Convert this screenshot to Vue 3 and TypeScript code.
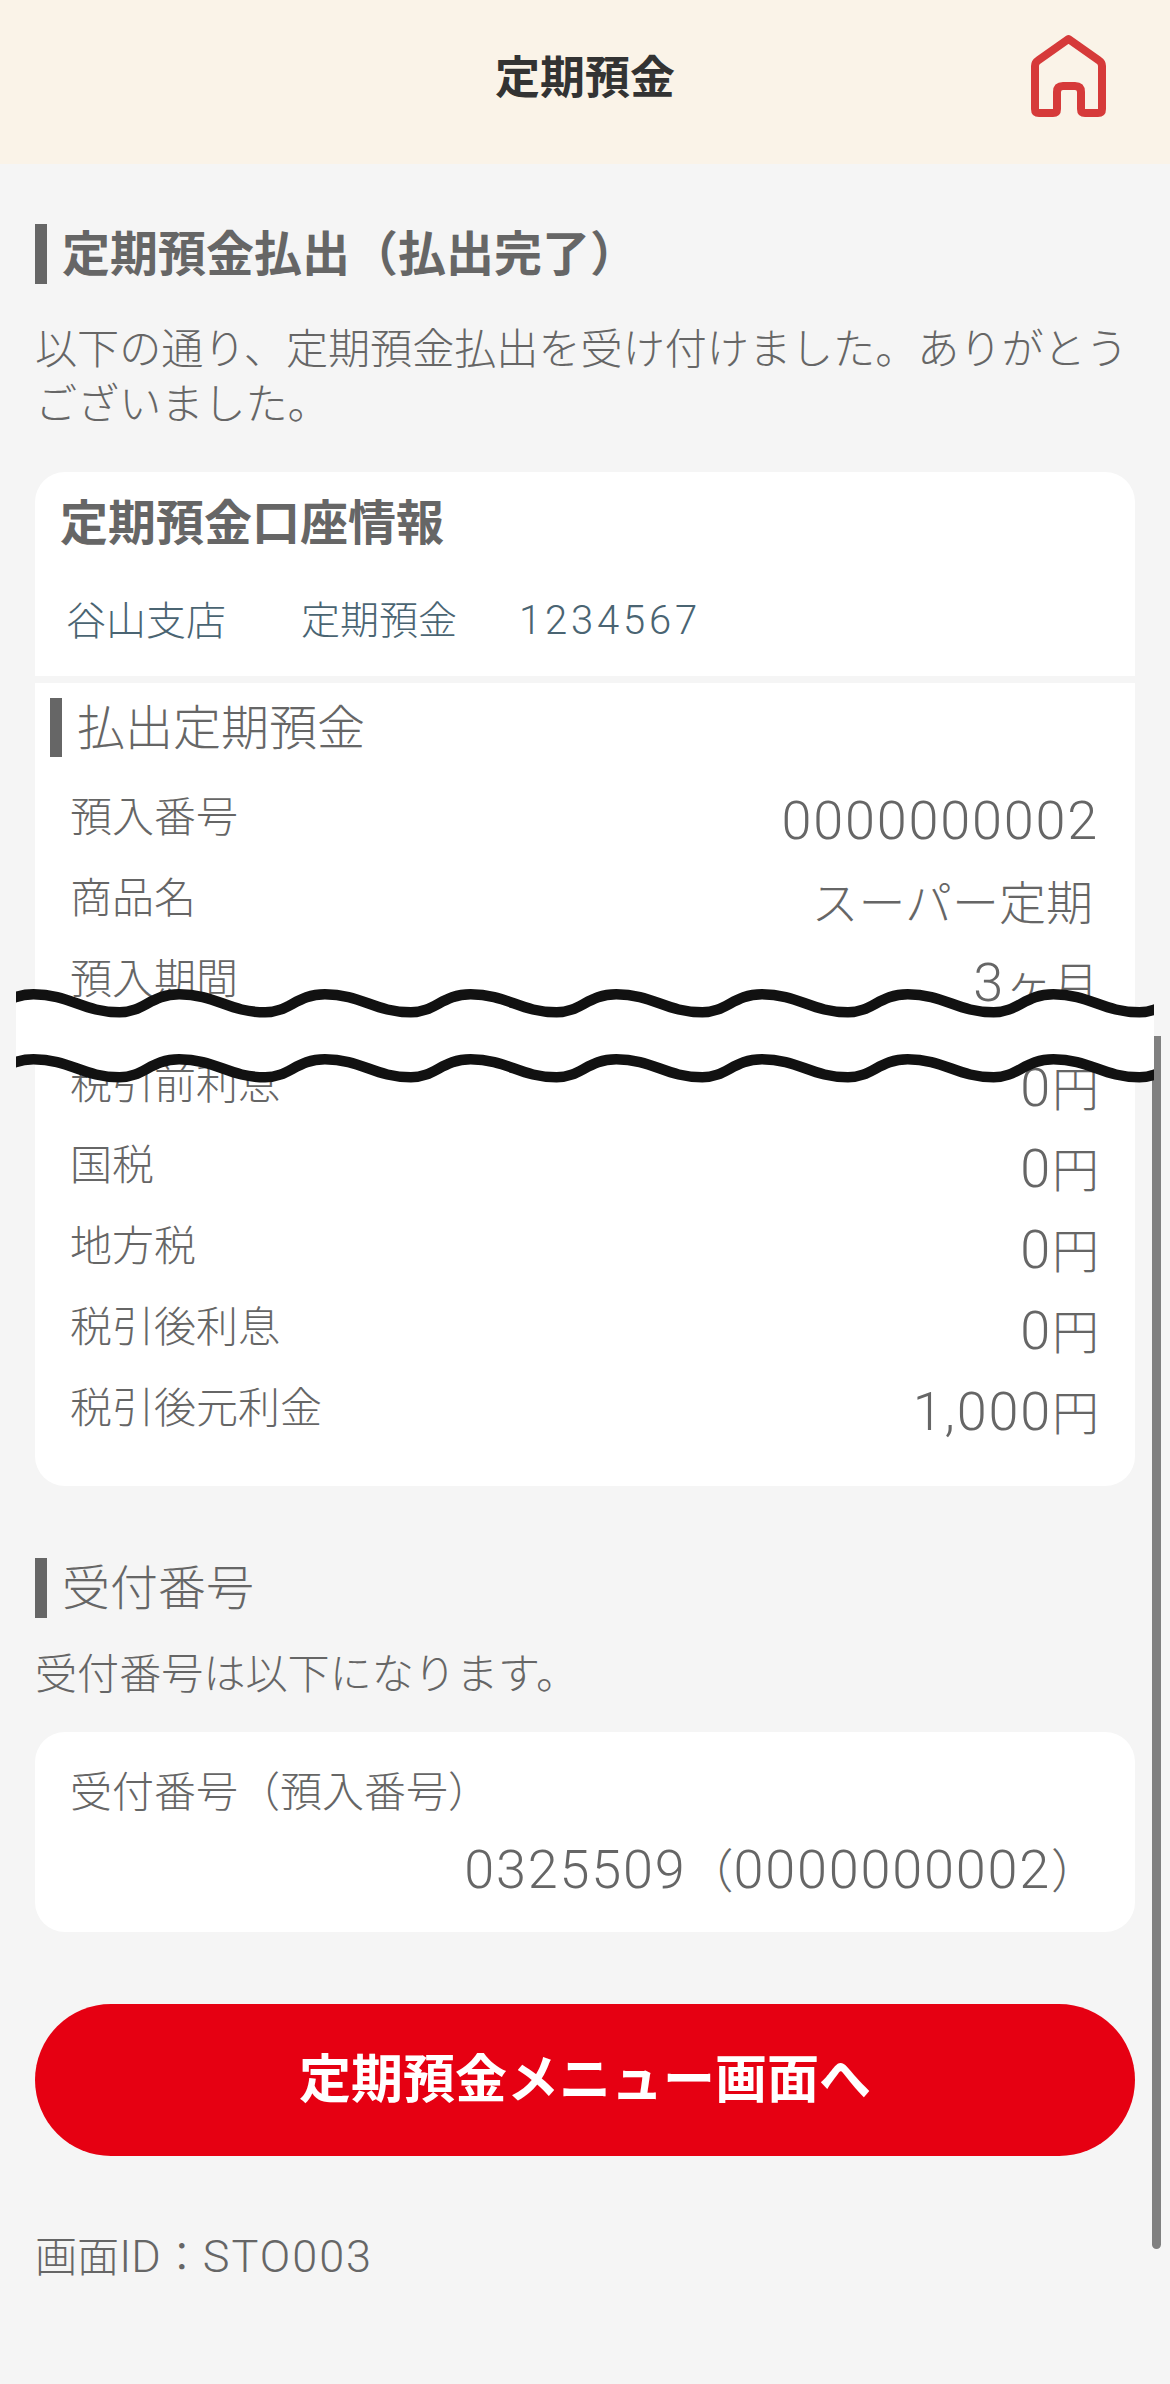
<template>
  <div class="page">
    <header class="top-bar">
      <span></span>
      <div class="top-title">定期預金</div>
      <svg class="home-icon" width="76" height="84" viewBox="0 0 76 84">
        <path
          d="M37.5 5 L68 26.5 Q71 28.5 71 32 V75 Q71 79 67 79 H54 Q50 79 50 75 V58 Q50 52 44 52 H32 Q26 52 26 58 V75 Q26 79 22 79 H8 Q4 79 4 75 V32 Q4 28.5 7 26.5 Z"
          fill="none"
          stroke="#d63a3a"
          stroke-width="8"
          stroke-linejoin="round"
        />
      </svg>
    </header>

    <main class="content">
      <h1 class="heading bold">定期預金払出（払出完了）</h1>
      <p class="intro">以下の通り、定期預金払出を受け付けました。ありがとうございました。</p>

      <section class="account-card">
        <h2 class="card-title">定期預金口座情報</h2>
        <div class="account-row">
          <span class="branch">谷山支店</span>
          <span class="kind">定期預金</span>
          <span class="number">1234567</span>
        </div>
      </section>

      <section class="detail-card">
        <h2 class="heading sub">払出定期預金</h2>
        <div
          v-for="row in rows"
          :key="row.label"
          class="row"
          :class="{ cut: row.cut }"
        >
          <span class="label">{{ row.label }}</span>
          <span class="value" :class="{ 'text-only': !row.num }"><span class="num">{{ row.num }}</span>{{ row.unit }}</span>
        </div>
      </section>

      <h2 class="heading receipt">受付番号</h2>
      <p class="note">受付番号は以下になります。</p>

      <section class="receipt-card">
        <div class="label">受付番号（預入番号）</div>
        <div class="value receipt-value">
          <span class="num">0325509</span>（<span class="num">0000000002</span>）
        </div>
      </section>

      <button class="menu-button">定期預金メニュー画面へ</button>
      <p class="screen-id">画面<span class="latin">ID</span>：<span class="latin wide">STO003</span></p>
    </main>

    <div class="scrollbar"></div>

    <svg class="tear" width="1138" height="110" viewBox="0 0 1138 110">
      <path :d="bandPath" fill="#fff" />
      <path :d="wavePath(topY)" class="wave" />
      <path :d="wavePath(bottomY)" class="wave" />
    </svg>
  </div>
</template>

<script setup lang="ts">
interface Row {
  label: string
  num?: string
  unit?: string
  cut?: boolean
}

const rows: Row[] = [
  { label: '預入番号', num: '0000000002' },
  { label: '商品名', unit: 'スーパー定期' },
  { label: '預入期間', num: '3', unit: 'ヶ月' },
  { label: '税引前利息', num: '0', unit: '円', cut: true },
  { label: '国税', num: '0', unit: '円' },
  { label: '地方税', num: '0', unit: '円' },
  { label: '税引後利息', num: '0', unit: '円' },
  { label: '税引後元利金', num: '1,000', unit: '円' }
]

const topY = 14.3
const bottomY = 79.3
const period = 145.7
const amp = 18

// points of the torn edge: anchor, control, control, anchor ...
function wavePoints(y: number): number[][] {
  const pts: number[][] = []
  let x = 17.5 - period
  pts.push([x, y])
  while (x < 1200) {
    const t = x + 86
    pts.push([x + 36, y], [t - 36, y + amp], [t, y + amp])
    const next = x + period
    pts.push([t + 24, y + amp], [next - 28, y], [next, y])
    x = next
  }
  return pts
}

function toPath(pts: number[][], first: string): string {
  let d = `${first} ${pts[0][0]} ${pts[0][1]}`
  for (let i = 1; i < pts.length; i += 3) {
    d += ` C${pts[i]} ${pts[i + 1]} ${pts[i + 2]}`
  }
  return d
}

function wavePath(y: number): string {
  return toPath(wavePoints(y), 'M')
}

const bandPath =
  wavePath(topY) + ' ' + toPath(wavePoints(bottomY).reverse(), 'L') + ' Z'
</script>

<style>
body {
  background: #f5f5f5;
}
</style>

<style scoped>
.page {
  position: relative;
  height: 2384px;
  overflow: hidden;
  background: #f5f5f5;
  color: #666;
  font-family: "Liberation Sans", "Noto Sans CJK JP", sans-serif;
  font-size: 42.1px;
  font-weight: 300;
}

.top-bar {
  display: grid;
  grid-template-columns: 1fr auto 1fr;
  align-items: center;
  height: 148px;
  padding: 0 63px 16px 0;
  background: #faf3e8;
}

.top-title {
  color: #333;
  font-size: 45px;
  font-weight: 700;
  padding-left: 63px;
}

.home-icon {
  justify-self: end;
  margin-top: 4px;
}

.content {
  padding: 0 35px;
}

h1,
h2,
p {
  margin: 0;
}

.heading {
  height: 60px;
  padding-left: 15px;
  border-left: 12px solid #666;
  font-size: 48px;
  font-weight: 300;
  line-height: 62px;
}

.bold {
  margin-top: 60px;
  font-weight: 700;
}

.intro {
  margin-top: 39px;
  line-height: 54.5px;
}

.account-card {
  height: 204px;
  margin-top: 40px;
  padding-top: 22px;
  box-sizing: border-box;
  background: #fff;
  border-radius: 30px 30px 0 0;
}

.card-title {
  padding-left: 25px;
  font-size: 48px;
  line-height: 60px;
}

.account-row {
  display: flex;
  margin-top: 42px;
  padding-left: 31px;
  color: #4a6472;
  font-size: 40px;
  line-height: 50px;
}

.branch {
  width: 235px;
}

.kind {
  width: 218px;
  font-size: 39px;
}

.number {
  font-family: Roboto, "Liberation Sans", sans-serif;
  letter-spacing: 3.8px;
}

.detail-card {
  margin-top: 7px;
  padding: 15px 0 38px;
  background: #fff;
  border-radius: 0 0 30px 30px;
}

.sub {
  height: 59px;
  margin: 0 0 19px 15px;
}

.row {
  display: flex;
  justify-content: space-between;
  height: 81px;
  padding: 0 36px 0 35px;
  line-height: 81px;
}

.cut {
  margin-top: 24px;
}

.label {
  position: relative;
  top: 1px;
  font-size: 42px;
}

.value {
  position: relative;
  top: 4px;
  font-size: 47px;
}

.text-only {
  margin-right: 6px;
}

.num {
  font-family: Roboto, "Liberation Sans", sans-serif;
  font-size: 54px;
  letter-spacing: 1.8px;
}

.receipt {
  margin-top: 72px;
}

.note {
  margin-top: 30px;
  line-height: 54px;
}

.receipt-card {
  margin-top: 30px;
  padding: 35px 37px 32px 35px;
  background: #fff;
  border-radius: 30px;
}

.receipt-card .label {
  line-height: 50px;
}

.receipt-value {
  top: 0;
  margin-top: 25px;
  line-height: 56px;
  text-align: right;
}

.menu-button {
  display: block;
  width: 100%;
  height: 152px;
  margin-top: 72px;
  padding: 0 0 10px;
  border: none;
  border-radius: 76px;
  background: #e60012;
  color: #fff;
  font-family: inherit;
  font-size: 52px;
  font-weight: 700;
}

.screen-id {
  margin-top: 74px;
  line-height: 54px;
}

.latin {
  font-family: Roboto, "Liberation Sans", sans-serif;
  font-size: 45px;
}

.wide {
  letter-spacing: 2px;
}

.scrollbar {
  position: absolute;
  top: 1036px;
  left: 1152px;
  width: 9px;
  height: 1213px;
  border-radius: 0 0 5px 5px;
  background: #808080;
}

.tear {
  position: absolute;
  top: 980px;
  left: 16px;
}

.wave {
  fill: none;
  stroke: #111;
  stroke-width: 10.5;
}
</style>
